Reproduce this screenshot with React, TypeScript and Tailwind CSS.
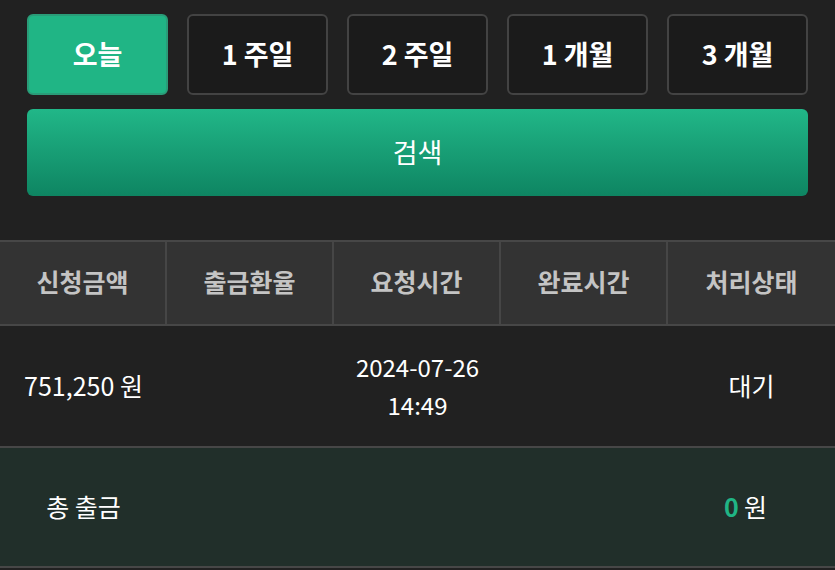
import React from 'react';

const PERIODS = ['오늘', '1 주일', '2 주일', '1 개월', '3 개월'];
const HEADERS = ['신청금액', '출금환율', '요청시간', '완료시간', '처리상태'];

const FONT = { fontFamily: '"Noto Sans CJK KR", "Noto Sans", sans-serif' };

export default function App() {
  return (
    <div className="w-[835px] h-[570px] bg-[#212121] text-white overflow-hidden" style={FONT}>
      <div className="px-[27px] pt-[14px]">
        <div className="grid grid-cols-5 gap-[19px]">
          {PERIODS.map((p, i) => (
            <button
              key={p}
              className={
                i === 0
                  ? 'h-[81px] rounded-[6px] border-2 border-[#2a9c78] bg-[#20b585] text-[27px] font-bold text-white'
                  : 'h-[81px] rounded-[6px] border-2 border-[#434343] bg-[#1b1b1b] text-[27px] font-bold text-white'
              }
            >
              {p}
            </button>
          ))}
        </div>
        <button className="mt-[14px] w-full h-[87px] rounded-[6px] bg-gradient-to-b from-[#21b788] to-[#0e8562] text-[27px] text-white">
          검색
        </button>
      </div>

      <div className="mt-[44px]">
        <div className="grid grid-cols-5 h-[86px] bg-[#333333] border-y-2 border-[#474747]">
          {HEADERS.map((h, i) => (
            <div
              key={h}
              className={
                i < 4
                  ? 'flex items-center justify-center pb-[3px] border-r-2 border-[#464646] text-[25px] font-bold text-[#c4c4c4]'
                  : 'flex items-center justify-center pb-[3px] text-[25px] font-bold text-[#c4c4c4]'
              }
            >
              {h}
            </div>
          ))}
        </div>

        <div className="grid grid-cols-5 h-[120px] items-center text-[25px] text-white">
          <div className="text-center">751,250 원</div>
          <div />
          <div className="text-center text-[24px] leading-[38px]">
            <div>2024-07-26</div>
            <div>14:49</div>
          </div>
          <div />
          <div className="text-center">대기</div>
        </div>

        <div className="grid grid-cols-5 h-[122px] items-center bg-[#212f2a] border-y-2 border-[#474747] text-[25px]">
          <div className="text-center">총 출금</div>
          <div />
          <div />
          <div />
          <div className="text-center pr-[12px]">
            <span className="font-bold text-[#20b585]">0</span>
            <span className="ml-[5px]">원</span>
          </div>
        </div>
      </div>
    </div>
  );
}
